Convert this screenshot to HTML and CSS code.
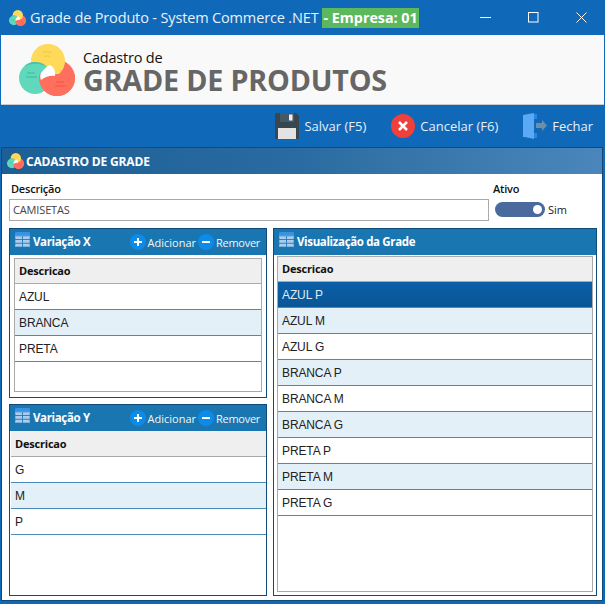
FILE: index.html
```html
<!DOCTYPE html>
<html lang="pt-BR">
<head>
<meta charset="utf-8">
<title>Grade de Produto</title>
<link rel="stylesheet" href="styles.css">
</head>
<body>
<svg class="defs" width="0" height="0" aria-hidden="true">
  <defs>
    <clipPath id="lower"><rect x="0" y="30" width="56" height="22"/></clipPath>
    <symbol id="logo" viewBox="0 0 56 52">
      <circle cx="38" cy="34" r="18" fill="#ff6f5e"/>
      <circle cx="29" cy="17" r="17" fill="#ffd95a"/>
      <circle cx="16" cy="34" r="16" fill="#5fd8bb"/>
      <circle cx="38" cy="34" r="18" fill="#ff6f5e" clip-path="url(#lower)"/>
      <path d="M5 23c3-4 7-5 11-5 6 0 10 2 13 6-4-3-9-5-14-4-4 0-7 1-10 3z" fill="#35b598" opacity=".6"/>
      <path d="M31 21c-3 1-6 4-9 8-1 2-1 5 0 7 4-3 9-5 14-4 1-4-1-9-5-11z" fill="#fff"/>
      <path d="M8 29h8M7 33h11" stroke="#3fb99c" stroke-width="1" fill="none"/>
      <path d="M23 8h10M25 12h6" stroke="#f2c63f" stroke-width="1" fill="none"/>
      <path d="M37 38h8M36 42h11" stroke="#f0574a" stroke-width="1" fill="none"/>
    </symbol>
    <symbol id="grid" viewBox="0 0 16 16">
      <path d="M0 1.500A1.500 1.500 0 0 1 1.500 0h13A1.500 1.500 0 0 1 16 1.500V5H0z" fill="#3a93e0"/>
      <rect x="0.500" y="4.500" width="15" height="11" fill="#a9cdea" stroke="#7fb4de"/>
      <path d="M0 8h16M0 12h16M8 4.500V16" stroke="#2a7cc0" stroke-width="1" fill="none"/>
    </symbol>
    <symbol id="plus" viewBox="0 0 16 16">
      <circle cx="8" cy="8" r="8" fill="#0d8be8"/>
      <path d="M8 4v8M4 8h8" stroke="#fff" stroke-width="2"/>
    </symbol>
    <symbol id="minus" viewBox="0 0 16 16">
      <circle cx="8" cy="8" r="8" fill="#0d8be8"/>
      <path d="M4 8h8" stroke="#fff" stroke-width="2"/>
    </symbol>
  </defs>
</svg>

<div class="window">
  <header class="titlebar">
    <svg class="title-logo"><use href="#logo"/></svg>
    <span class="title-text">Grade de Produto - System Commerce .NET</span>
    <span class="title-badge">- Empresa: 01</span>
    <div class="win-controls">
      <svg class="win-btn" viewBox="0 0 11 11"><path d="M0 5.500h11" stroke="#fff" fill="none"/></svg>
      <svg class="win-btn" viewBox="0 0 11 11"><rect x="0.500" y="0.500" width="9.500" height="9.500" stroke="#fff" fill="none"/></svg>
      <svg class="win-btn" viewBox="0 0 11 11"><path d="M0.500 0.500l10 10M10.500 0.500l-10 10" stroke="#fff" fill="none"/></svg>
    </div>
  </header>

  <section class="banner">
    <svg class="banner-logo"><use href="#logo"/></svg>
    <div class="banner-text">
      <div class="banner-sub">Cadastro de</div>
      <div class="banner-main">GRADE DE PRODUTOS</div>
    </div>
  </section>

  <nav class="toolbar">
    <div class="tool">
      <svg class="tool-icon" viewBox="0 0 24 26">
        <path d="M0 1.500A1.500 1.500 0 0 1 1.500 0H21l3 3v21.500a1.500 1.500 0 0 1-1.500 1.500h-21A1.500 1.500 0 0 1 0 24.500z" fill="#37474f"/>
        <rect x="3" y="15" width="18" height="11" fill="#e3e3e3"/>
        <rect x="5" y="0" width="14" height="9" fill="#455a64"/>
        <rect x="14" y="1.500" width="3.500" height="6" fill="#eceff1"/>
      </svg>
      <span>Salvar (F5)</span>
    </div>
    <div class="tool">
      <svg class="tool-icon" viewBox="0 0 24 24">
        <circle cx="12" cy="12" r="12" fill="#f0403c"/>
        <path d="M8 8l8 8M16 8l-8 8" stroke="#fff" stroke-width="2.500"/>
      </svg>
      <span>Cancelar (F6)</span>
    </div>
    <div class="tool tool-last">
      <svg class="tool-icon" viewBox="0 0 24 26">
        <path d="M0 2L11 0v26L2 24H0z" fill="#5aa9f5"/>
        <path d="M11 1h3v5h-3zM11 20h3v5h-3z" fill="#2b86de"/>
        <path d="M13 10h6V7l5 5.500-5 5.500v-3h-6z" fill="#6d8ea8"/>
      </svg>
      <span>Fechar</span>
    </div>
  </nav>

  <main class="panel">
    <div class="panel-head">
      <svg class="panel-logo"><use href="#logo"/></svg>
      <span>CADASTRO DE GRADE</span>
    </div>
    <div class="form-row">
      <div class="field-desc">
        <label class="label label-desc">Descrição</label>
        <div class="input">CAMISETAS</div>
      </div>
      <div class="field-active">
        <label class="label">Ativo</label>
        <div class="switch-row">
          <span class="switch"><span class="knob"></span></span>
          <span>Sim</span>
        </div>
      </div>
    </div>

    <div class="columns">
      <div class="col-left">
        <section class="group group-x">
          <div class="group-head">
            <svg class="grid-icon"><use href="#grid"/></svg>
            <span class="group-title">Variação X</span>
            <span class="group-actions">
              <svg class="act-icon"><use href="#plus"/></svg><span class="act-label act-add">Adicionar</span>
              <svg class="act-icon"><use href="#minus"/></svg><span class="act-label act-rem">Remover</span>
            </span>
          </div>
          <div class="table table-inset">
            <div class="th">Descricao</div>
            <div class="tr">AZUL</div>
            <div class="tr alt">BRANCA</div>
            <div class="tr">PRETA</div>
          </div>
        </section>
        <section class="group group-y">
          <div class="group-head">
            <svg class="grid-icon"><use href="#grid"/></svg>
            <span class="group-title">Variação Y</span>
            <span class="group-actions">
              <svg class="act-icon"><use href="#plus"/></svg><span class="act-label act-add">Adicionar</span>
              <svg class="act-icon"><use href="#minus"/></svg><span class="act-label act-rem">Remover</span>
            </span>
          </div>
          <div class="table table-flat">
            <div class="th">Descricao</div>
            <div class="tr">G</div>
            <div class="tr alt">M</div>
            <div class="tr">P</div>
          </div>
        </section>
      </div>
      <section class="group group-view">
        <div class="group-head">
          <svg class="grid-icon"><use href="#grid"/></svg>
          <span class="group-title">Visualização da Grade</span>
        </div>
        <div class="table table-view">
          <div class="th">Descricao</div>
          <div class="tr selected">AZUL P</div>
          <div class="tr alt">AZUL M</div>
          <div class="tr">AZUL G</div>
          <div class="tr alt">BRANCA P</div>
          <div class="tr">BRANCA M</div>
          <div class="tr alt">BRANCA G</div>
          <div class="tr">PRETA P</div>
          <div class="tr alt">PRETA M</div>
          <div class="tr">PRETA G</div>
        </div>
      </section>
    </div>
  </main>
</div>
</body>
</html>
```

FILE: styles.css
```css
* { box-sizing: border-box; }
html, body { margin: 0; padding: 0; }
body { width: 605px; height: 604px; overflow: hidden; font-family: "Open Sans", "Liberation Sans", sans-serif; background: #1068b8; }
.defs { position: absolute; }
.window { width: 605px; height: 604px; display: flex; flex-direction: column; }

.titlebar { height: 35px; flex: none; display: flex; align-items: center; padding-left: 9px; color: #e9f2fa; font-size: 14.500px; }
.title-logo { width: 17px; height: 16px; margin-right: 4px; }
.title-text { letter-spacing: -0.150px; white-space: nowrap; }
.title-badge { margin-left: 4px; background: #5cb85c; color: #fff; font-weight: 700; font-size: 14.300px; line-height: 20px; height: 20px; padding: 0 1px; white-space: nowrap; }
.win-controls { margin-left: auto; display: flex; gap: 37px; padding-right: 18px; }
.win-btn { width: 11px; height: 11px; display: block; }

.banner { height: 70px; flex: none; margin: 0 1px; background: #f9f9f9; border-bottom: 1px solid #ccc; display: flex; align-items: flex-start; padding: 9px 0 0 18px; }
.banner-logo { width: 56px; height: 52px; flex: none; }
.banner-text { margin-left: 8px; padding-top: 5px; }
.banner-sub { font-size: 14.500px; line-height: 18px; color: #111; letter-spacing: -0.200px; }
.banner-main { font-size: 28.700px; line-height: 25px; font-weight: 700; color: #666; letter-spacing: -0.180px; white-space: nowrap; }

.toolbar { height: 42px; flex: none; display: flex; justify-content: flex-end; align-items: center; color: #e6f0f9; font-size: 13px; padding-right: 12px; }
.tool { display: flex; align-items: center; gap: 5px; margin-left: 25px; }
.tool-icon { width: 24px; height: 26px; flex: none; }
.tool span { white-space: nowrap; }

.panel { flex: 1; margin: 0 2px 3px 1px; background: #fff; border: 1px solid #0f4a78; display: flex; flex-direction: column; min-height: 0; }
.panel-head { height: 26px; flex: none; display: flex; align-items: center; padding-left: 5px; gap: 2px; color: #fff; font-size: 12px; font-weight: 700; letter-spacing: -0.160px; background: linear-gradient(90deg, #1c5f94 0%, #2a6ca1 50%, #4a86bb 100%); }
.panel-logo { width: 17px; height: 16px; }

.form-row { display: flex; padding: 7px 5px 0 7px; height: 54px; flex: none; }
.field-desc { width: 480px; }
.label { display: block; font-size: 11px; font-weight: 600; color: #111; line-height: 15px; letter-spacing: -0.200px; }
.label-desc { padding-left: 2px; }
.input { height: 22px; margin-top: 3px; border: 1px solid #aaa; font-size: 11px; line-height: 20px; padding-left: 3px; color: #444; letter-spacing: -0.150px; }
.field-active { margin-left: 4px; }
.switch-row { display: flex; align-items: center; gap: 3px; margin-top: 6px; margin-left: 2px; font-size: 11px; color: #222; }
.switch { width: 50px; height: 15px; border-radius: 8px; background: #4a6a9e; position: relative; display: block; }
.knob { position: absolute; right: 3px; top: 3px; width: 9px; height: 9px; border-radius: 50%; background: #fff; }

.columns { flex: 1; min-height: 0; display: flex; gap: 6px; padding: 0 5px 4px 7px; }
.col-left { width: 258px; flex: none; display: flex; flex-direction: column; gap: 6px; }
.group { border: 1px solid #0f4a78; display: flex; flex-direction: column; min-height: 0; }
.group-x { height: 170px; flex: none; }
.group-y { flex: 1; }
.group-view { flex: 1; }
.group-head { height: 26px; flex: none; background: #1a76b0; display: flex; align-items: center; padding-left: 5px; color: #f0f6fb; }
.grid-icon { width: 15px; height: 15px; flex: none; margin: 0 3px 5px 0; }
.group-title { font-size: 11.500px; font-weight: 700; color: #fff; letter-spacing: -0.350px; white-space: nowrap; margin-bottom: 2px; }
.group-actions { margin-left: auto; display: flex; align-items: center; padding-right: 6px; font-size: 11px; }
.act-icon { width: 16px; height: 16px; flex: none; margin-right: 2px; }
.act-label { white-space: nowrap; }
.act-add { margin-right: 2px; }
.act-rem { letter-spacing: -0.280px; }

.table { flex: 1; min-height: 0; background: #fff; }
.table-inset { margin: 3px 4px 5px 4px; border: 1px solid #aaa; }
.table-flat { margin: 0 0 0 1px; }
.table-view { margin: 1px 3px 3px 3px; border: 1px solid #aaa; }
.th { height: 25px; background: #efefef; border-bottom: 1px solid #aaa; font-size: 11px; font-weight: 700; line-height: 23px; padding-left: 4px; color: #111; letter-spacing: -0.200px; }
.table-flat .th { height: 26px; line-height: 25px; }
.tr { height: 26px; border-bottom: 1px solid #4a8ab5; font-family: "Liberation Sans", sans-serif; font-size: 12px; line-height: 27px; padding-left: 4px; color: #222; letter-spacing: -0.120px; }
.alt { background: #e4f0f8; }
.selected { background: linear-gradient(180deg, #0a5fa8, #0a5596); color: #dfeaf4; }
```
